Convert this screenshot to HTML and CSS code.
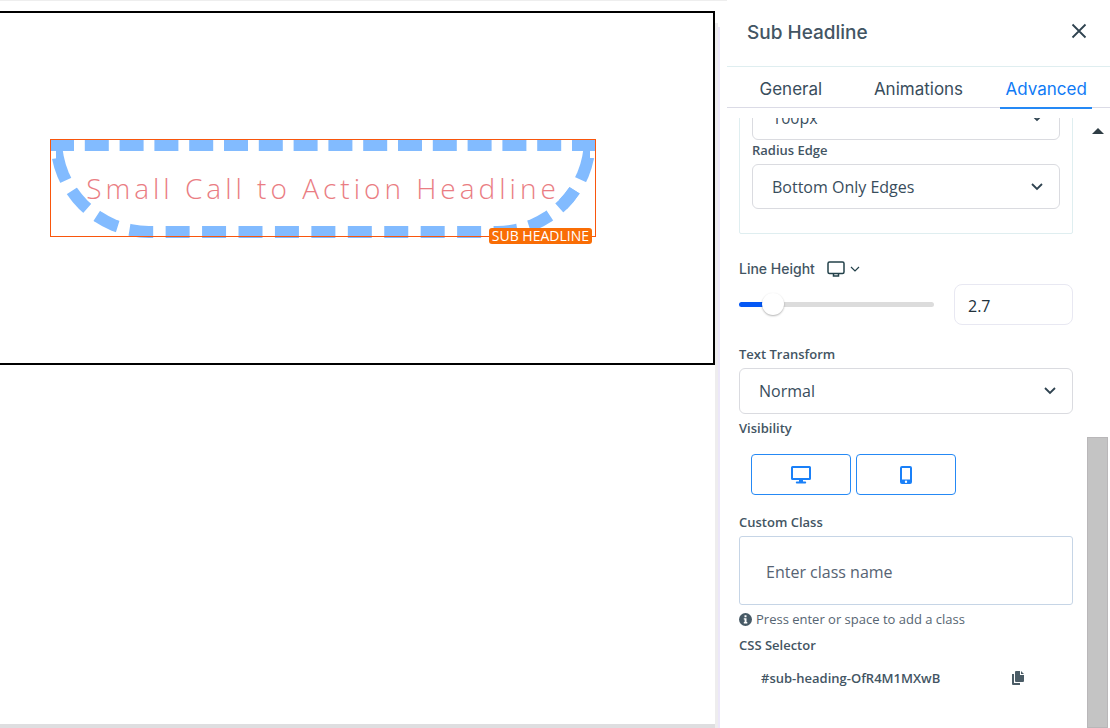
FILE: index.html
```html
<!DOCTYPE html>
<html lang="en">
<head>
  <meta charset="UTF-8">
  <meta name="viewport" content="width=device-width, initial-scale=1.0">
  <title>Page Builder - Sub Headline</title>
  <link rel="stylesheet" href="styles.css">
</head>
<body>

  <main class="canvas">
    <div class="page">
      <section class="row">
        <div class="element">
          <h2 class="sub-heading">Small Call to Action Headline</h2>
          <span class="element-tag">SUB HEADLINE</span>
        </div>
      </section>
    </div>
  </main>

  <aside class="panel">
    <header class="panel-header">
      <h1>Sub Headline</h1>
      <button class="icon-button" aria-label="Close">
        <svg width="16" height="16" viewBox="0 0 16 16"><path d="M1.5 1.5l13 13M14.5 1.5l-13 13" /></svg>
      </button>
    </header>

    <nav class="tabs">
      <a href="#general">General</a>
      <a href="#animations">Animations</a>
      <a href="#advanced" class="active">Advanced</a>
    </nav>

    <div class="panel-body">
      <div class="settings">

        <div class="group">
          <div class="select">
            <select aria-label="Radius"><option>100px</option></select>
            <svg width="12" height="8" viewBox="0 0 12 8"><path d="M1 1l5 5 5-5" /></svg>
          </div>
          <label for="edge">Radius Edge</label>
          <div class="select">
            <select id="edge"><option>Bottom Only Edges</option></select>
            <svg width="12" height="8" viewBox="0 0 12 8"><path d="M1 1l5 5 5-5" /></svg>
          </div>
        </div>

        <div class="field">
          <div class="label-row">
            <label for="line-height">Line Height</label>
            <button class="device-button" aria-label="Choose device">
              <svg width="18" height="16" viewBox="0 0 18 16"><rect x="1" y="1" width="16" height="11.5" rx="1.5" /><path d="M6.500 12.500v2.500h5v-2.500" /></svg>
              <svg class="caret" width="10" height="6" viewBox="0 0 10 6"><path d="M1 1l4 4 4-4" /></svg>
            </button>
          </div>
          <div class="slider-row">
            <input type="range" id="line-height" min="0" max="20" step="0.1" value="2.7">
            <input type="text" class="number" value="2.7" aria-label="Line height value">
          </div>
        </div>

        <div class="field">
          <label for="transform">Text Transform</label>
          <div class="select tall">
            <select id="transform"><option>Normal</option></select>
            <svg width="12" height="8" viewBox="0 0 12 8"><path d="M1 1l5 5 5-5" /></svg>
          </div>
        </div>

        <div class="field visibility">
          <h3>Visibility</h3>
          <div class="toggle-row">
            <button class="toggle" aria-label="Desktop">
              <svg width="20" height="18" viewBox="0 0 20 18"><path fill-rule="evenodd" d="M1.5 0h17A1.5 1.5 0 0 1 20 1.5v11a1.5 1.5 0 0 1-1.500 1.500H12v1.500h2.200a1 1 0 0 1 0 2H5.800a1 1 0 0 1 0-2H8V14H1.500A1.500 1.500 0 0 1 0 12.500v-11A1.500 1.500 0 0 1 1.500 0zM2 2v10h16V2z" /></svg>
            </button>
            <button class="toggle" aria-label="Mobile">
              <svg width="12" height="18" viewBox="0 0 12 18"><path fill-rule="evenodd" d="M2 0h8a2 2 0 0 1 2 2v14a2 2 0 0 1-2 2H2a2 2 0 0 1-2-2V2a2 2 0 0 1 2-2zM2 2v11.500h8V2zM6 14.500a1.200 1.200 0 1 0 0 2.400 1.200 1.200 0 0 0 0-2.400z" /></svg>
            </button>
          </div>
        </div>

        <div class="field">
          <label for="custom-class">Custom Class</label>
          <input type="text" class="class-input" id="custom-class" placeholder="Enter class name">
          <p class="hint">
            <svg width="13" height="13" viewBox="0 0 13 13"><circle cx="6.500" cy="6.500" r="6.500" /><path fill="#fff" d="M5.500 2.300h2v1.900h-2zM4.800 5.200h2.700v3.900h.8v1.300H4.800V9.100h.8V6.500h-.8z" /></svg>
            Press enter or space to add a class
          </p>
        </div>

        <div class="field selector">
          <h3>CSS Selector</h3>
          <div class="selector-row">
            <code>#sub-heading-OfR4M1MXwB</code>
            <button class="icon-button copy" aria-label="Copy selector">
              <svg width="12" height="14" viewBox="0 0 12 14"><path d="M0 3h2v9h6v2H1a1 1 0 0 1-1-1zM4 0h4v4h4v6a1 1 0 0 1-1 1H4a1 1 0 0 1-1-1V1a1 1 0 0 1 1-1zM9 0l3 3H9z" /></svg>
            </button>
          </div>
        </div>

      </div>

      <div class="scrollbar">
        <div class="scroll-up"></div>
        <div class="scroll-thumb"></div>
      </div>
    </div>
  </aside>

</body>
</html>
```

FILE: styles.css
```css
* {
  box-sizing: border-box;
}

body {
  margin: 0;
  display: flex;
  height: 100vh;
  overflow: hidden;
  background-color: #fff;
  color: #435563;
  font-family: "Open Sans", "Noto Sans", sans-serif;
  font-size: 13px;
  line-height: 20px;
}

h1, h2, h3, p {
  margin: 0;
}

button {
  background: none;
  border: none;
  padding: 0;
  cursor: pointer;
}

svg {
  display: block;
  flex: none;
}

/* canvas */
.canvas {
  flex: 1;
  min-width: 0;
  display: flex;
  border-top: 1px solid #eee;
  padding: 10px 12px 4px 0;
}

.page {
  flex: 1;
  min-width: 0;
  background-color: #fff;
  box-shadow: 0 4px 0 #dedee0, 3px 12px 0 #eeedee, 5px 16px 0 #ece7f9;
}

.row {
  margin-left: -69px;
  padding: 126px 117px 125px;
  border: 2px solid #000;
}

.element {
  position: relative;
}

.element::after {
  content: "";
  position: absolute;
  inset: 0 0 1px;
  border: 1px solid #f9560c;
}

.sub-heading {
  border: 12px dashed #82bbff;
  border-radius: 0 0 100px 100px;
  color: #ea7d83;
  font-size: 28px;
  font-weight: 300;
  letter-spacing: 4px;
  line-height: 75px;
  text-align: center;
  white-space: nowrap;
}

.element-tag {
  position: absolute;
  right: 4px;
  bottom: -6px;
  z-index: 1;
  padding: 0 3px;
  border-radius: 3px;
  background-color: #f96d05;
  color: #fff;
  font-size: 14px;
  line-height: 16px;
}

/* settings panel */
.panel {
  width: 383px;
  flex: none;
  display: flex;
  flex-direction: column;
}

.panel-header {
  display: flex;
  align-items: center;
  justify-content: space-between;
  height: 67px;
  padding: 0 23px 5px 20px;
  border-bottom: 1px solid #dfeef0;
}

.panel-header h1 {
  padding-top: 4px;
  font-family: Inter, sans-serif;
  font-size: 19px;
  font-weight: 500;
}

.icon-button svg {
  fill: none;
  stroke: #2f4350;
  stroke-width: 1.8;
}

.tabs {
  display: grid;
  grid-template-columns: repeat(3, 1fr);
  justify-items: center;
  height: 41px;
  border-bottom: 1px solid #dbdbe6;
}

.tabs a {
  height: 42px;
  padding: 0 5px;
  color: #394d5c;
  font-family: Inter, sans-serif;
  font-size: 17px;
  line-height: 44px;
  text-decoration: none;
}

.tabs a.active {
  border-bottom: 2px solid #2589f5;
  color: #0f7af5;
}

.panel-body {
  flex: 1;
  min-height: 0;
  display: flex;
  margin-top: 10px;
  overflow: hidden;
}

.settings {
  flex: 1;
  padding: 0 14px 0 12px;
}

.settings label,
.settings h3 {
  display: block;
  font-size: 13px;
  font-weight: 600;
  line-height: 20px;
  margin-bottom: 4px;
}

/* scrolled partly under the tabs */
.group {
  margin-top: -36px;
  padding: 12px 12px 24px;
  border: 1px solid #dfeef0;
  border-radius: 2px;
  margin-bottom: 25px;
}

.select {
  position: relative;
}

.select select {
  appearance: none;
  display: block;
  width: 100%;
  height: 45px;
  padding: 0 19px;
  border: 1px solid #dadbe0;
  border-radius: 6px;
  background-color: #fff;
  color: #394d5c;
  font-family: inherit;
  font-size: 16px;
}

.select.tall select {
  height: 46px;
}

.select svg {
  position: absolute;
  right: 17px;
  top: 19px;
  fill: none;
  stroke: #2f4350;
  stroke-width: 1.8;
}

.settings .label-row {
  display: flex;
  align-items: center;
  gap: 12px;
  margin-bottom: 5px;
}

.settings .label-row label {
  font-family: Inter, sans-serif;
  font-size: 14px;
  font-weight: 500;
  margin-bottom: 0;
}

.device-button {
  display: flex;
  align-items: center;
  gap: 5px;
}

.device-button svg {
  fill: none;
  stroke: #23414a;
  stroke-width: 1.5;
}

.device-button .caret {
  stroke-width: 1.2;
}

.slider-row {
  display: flex;
  align-items: center;
  gap: 20px;
  margin-bottom: 19px;
}

input[type="range"] {
  appearance: none;
  flex: 1;
  min-width: 0;
  height: 24px;
  margin: 0;
  background: none;
}

input[type="range"]::-webkit-slider-runnable-track {
  height: 5px;
  border-radius: 3px;
  background: linear-gradient(to right, #0558f5 17%, #dcdcdc 17%);
}

input[type="range"]::-webkit-slider-thumb {
  appearance: none;
  width: 22px;
  height: 22px;
  margin-top: -9px;
  border-radius: 50%;
  background-color: #fff;
  box-shadow: 0 1px 2px rgba(0, 0, 0, 0.3);
}

.number {
  width: 119px;
  height: 41px;
  padding: 2px 13px 0;
  border: 1px solid #e8e8f2;
  border-radius: 8px;
  color: #22313b;
  font-family: inherit;
  font-size: 16px;
}

.visibility {
  margin-top: 4px;
}

.toggle-row {
  display: flex;
  gap: 5px;
  padding: 12px 12px 17px;
}

.toggle {
  display: flex;
  align-items: center;
  justify-content: center;
  width: 100px;
  height: 41px;
  border: 1px solid #2589f5;
  border-radius: 4px;
}

.toggle svg {
  fill: #1a80f8;
}

.class-input {
  display: block;
  width: 100%;
  height: 69px;
  padding: 2px 26px 0;
  border: 1px solid #c6d5e6;
  border-radius: 3px;
  font-family: inherit;
  font-size: 16px;
}

.class-input::placeholder {
  color: #566373;
}

.hint {
  display: flex;
  align-items: center;
  gap: 4px;
  margin: 4px 0 6px;
  color: #566572;
}

.hint svg {
  fill: #475a66;
}

.selector-row {
  display: flex;
  align-items: center;
  justify-content: space-between;
  padding: 9px 49px 0 22px;
}

.selector-row code {
  font-family: inherit;
  font-size: 13px;
  font-weight: 600;
}

.copy svg {
  fill: #4b5c66;
  stroke: none;
}

/* scrollbar */
.scrollbar {
  display: flex;
  flex-direction: column;
  justify-content: space-between;
  width: 21px;
  margin-right: 2px;
}

.scroll-up {
  align-self: center;
  margin-top: 10px;
  border: 6px solid transparent;
  border-top: none;
  border-bottom-color: #2f3d45;
}

.scroll-thumb {
  height: 40vh;
  border: 1px solid #b9b7b9;
  background-color: #c4c4c4;
}
```
